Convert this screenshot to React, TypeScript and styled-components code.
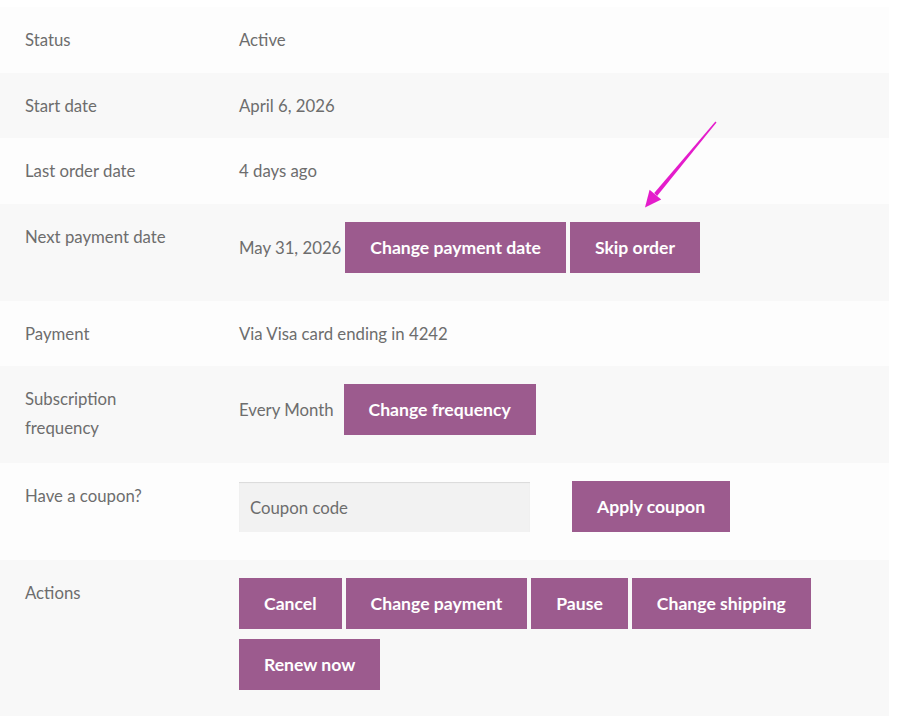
import React from "react";
import styled, { createGlobalStyle } from "styled-components";

const Global = createGlobalStyle`
  body {
    margin: 0;
    background: #ffffff;
    font-family: Lato, "Liberation Sans", sans-serif;
    color: #6d6d6d;
  }
`;

const Page = styled.div`
  position: relative;
  padding-top: 7px;
  width: 889px;
`;

const Table = styled.table`
  width: 889px;
  border-collapse: collapse;
  border-spacing: 0;
  table-layout: fixed;
  font-size: 16.75px;
  line-height: 29px;
`;

const Row = styled.tr`
  &:nth-child(odd) > * {
    background: #fdfdfd;
  }
  &:nth-child(even) > * {
    background: #f8f8f8;
  }
`;

const Label = styled.th`
  width: 164px;
  padding: 18.25px 25px;
  text-align: left;
  vertical-align: top;
  font-weight: 400;
`;

const Value = styled.td`
  padding: 18.25px 25px;
  vertical-align: top;
`;

const Group = styled.div<{ $gap?: number }>`
  display: flex;
  flex-wrap: wrap;
  align-items: center;
  column-gap: ${(p) => p.$gap ?? 4}px;
  row-gap: 10px;
  margin-bottom: 9.5px;
`;

const Button = styled.button<{ $lead?: number }>`
  margin: 0 0 0 ${(p) => p.$lead ?? 0}px;
  padding: 12px 25px;
  border: 0;
  border-radius: 0;
  background: #9c5b8e;
  color: #ffffff;
  font-family: Lato, "Liberation Sans", sans-serif;
  font-size: 17.6px;
  font-weight: 700;
  line-height: 27px;
  cursor: pointer;
`;

const CouponInput = styled.input`
  box-sizing: border-box;
  width: 291px;
  height: 50px;
  margin: 1px 42px 0 0;
  padding: 0 11px;
  border: 0;
  border-radius: 0;
  outline: none;
  background: #f2f2f2;
  box-shadow: inset 0 1px 1px rgba(0, 0, 0, 0.1);
  font-family: Lato, "Liberation Sans", sans-serif;
  font-size: 16.75px;
  color: #6d6d6d;

  &::placeholder {
    color: #6d6d6d;
    opacity: 1;
  }
`;

const Annotation = styled.svg`
  position: absolute;
  left: 0;
  top: 0;
  width: 899px;
  height: 716px;
  pointer-events: none;
`;

export default function App() {
  return (
    <>
      <Global />
      <Page>
        <Table>
          <tbody>
            <Row>
              <Label>Status</Label>
              <Value>Active</Value>
            </Row>
            <Row>
              <Label>Start date</Label>
              <Value>April 6, 2026</Value>
            </Row>
            <Row>
              <Label>Last order date</Label>
              <Value>4 days ago</Value>
            </Row>
            <Row>
              <Label>Next payment date</Label>
              <Value>
                <Group>
                  <span>May 31, 2026</span>
                  <Button>Change payment date</Button>
                  <Button>Skip order</Button>
                </Group>
              </Value>
            </Row>
            <Row>
              <Label>Payment</Label>
              <Value>Via Visa card ending in 4242</Value>
            </Row>
            <Row>
              <Label>
                Subscription
                <br />
                frequency
              </Label>
              <Value>
                <Group>
                  <span>Every Month</span>
                  <Button $lead={6}>Change frequency</Button>
                </Group>
              </Value>
            </Row>
            <Row>
              <Label>Have a coupon?</Label>
              <Value>
                <Group $gap={0}>
                  <CouponInput placeholder="Coupon code" />
                  <Button>Apply coupon</Button>
                </Group>
              </Value>
            </Row>
            <Row>
              <Label>Actions</Label>
              <Value>
                <Group>
                  <Button>Cancel</Button>
                  <Button>Change payment</Button>
                  <Button>Pause</Button>
                  <Button>Change shipping</Button>
                  <Button>Renew now</Button>
                </Group>
              </Value>
            </Row>
          </tbody>
        </Table>
        <Annotation viewBox="0 0 899 716">
          <polygon
            points="716.5,122.5 715.4,121.6 654.2,193.1 657.1,195.9"
            fill="#e41ccb"
          />
          <polygon
            points="645,207.5 649.6,189.8 661.2,199.6"
            fill="#e41ccb"
          />
        </Annotation>
      </Page>
    </>
  );
}
